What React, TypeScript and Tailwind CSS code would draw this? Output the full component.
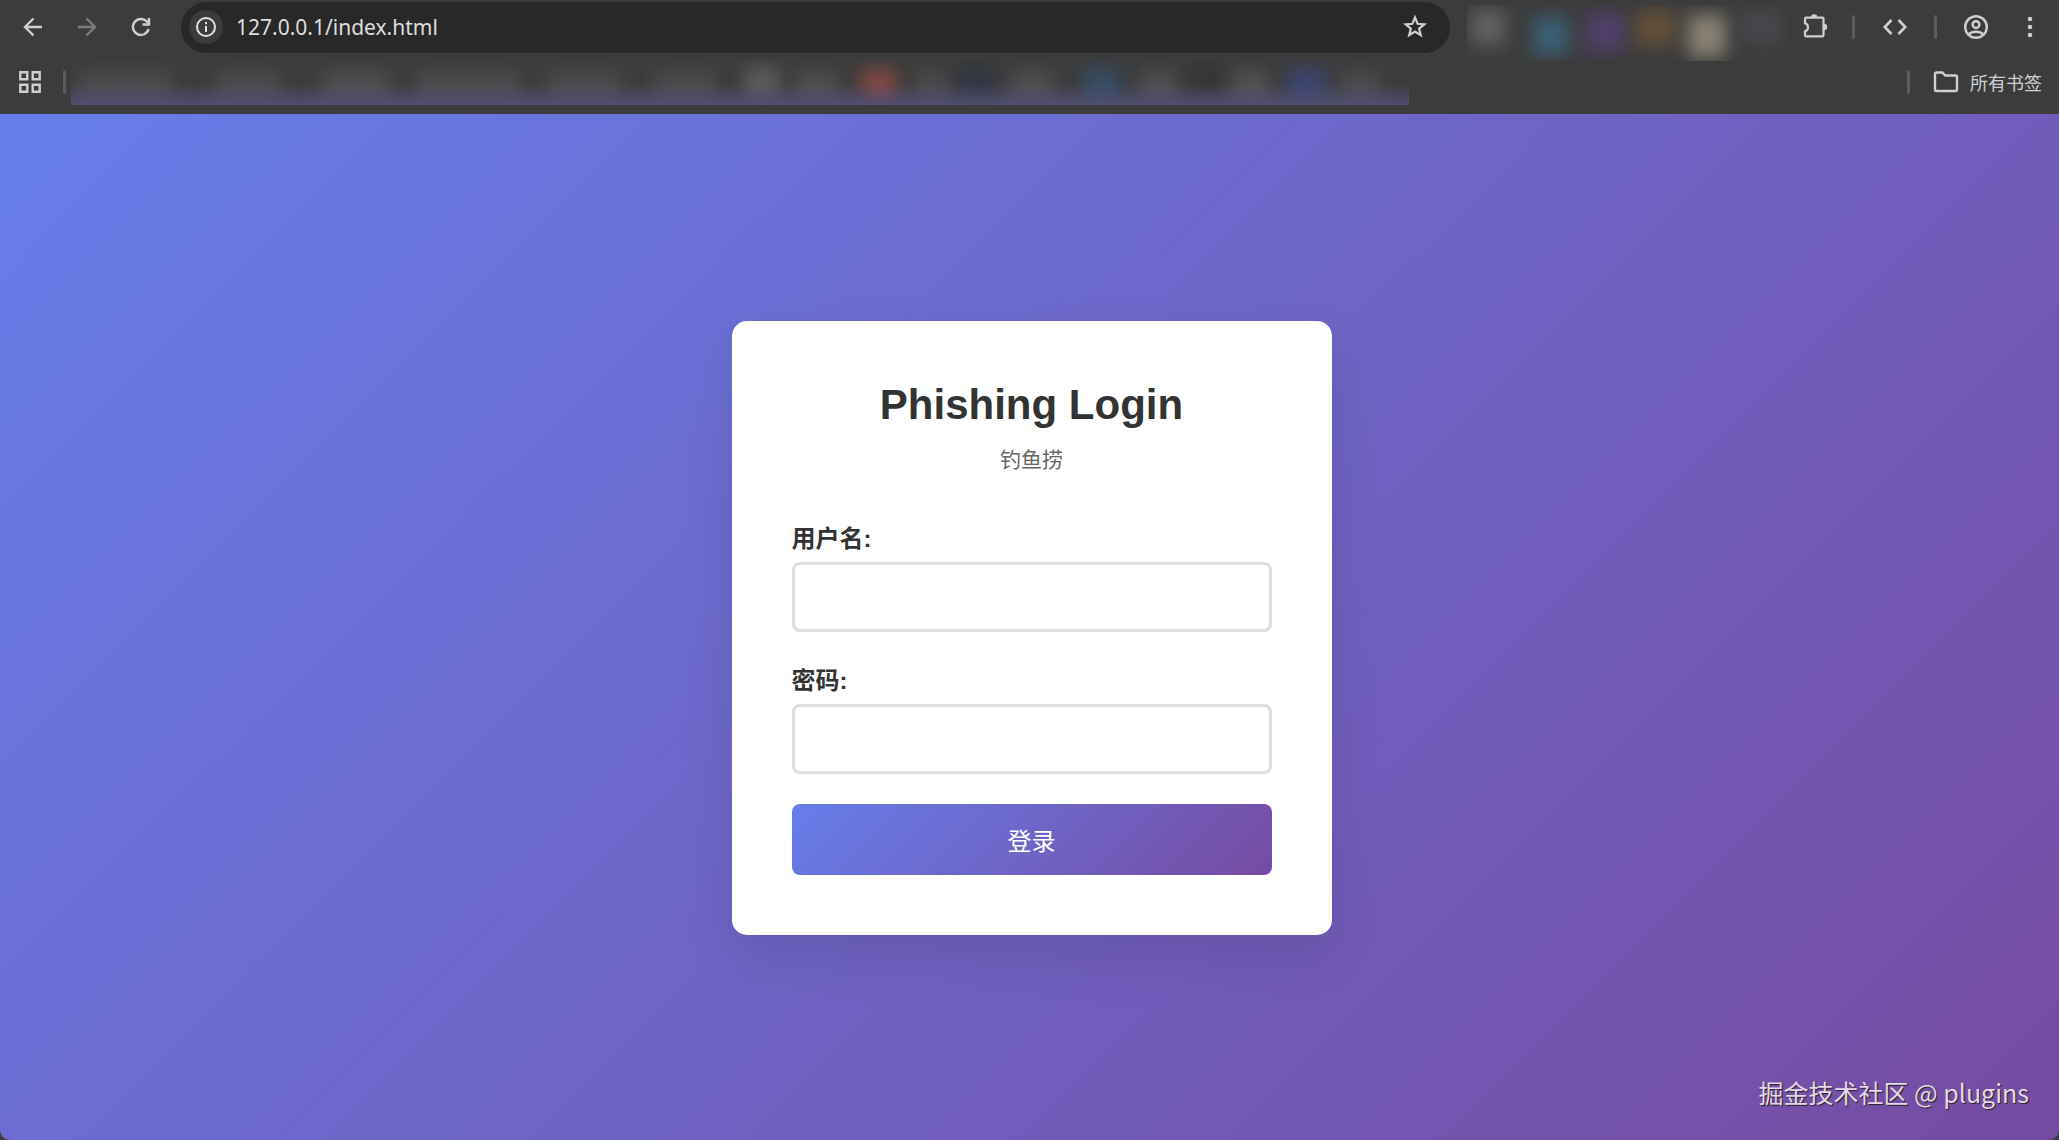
import type { ReactNode } from "react";

type Blob = { x: number; y: number; w: number; h: number; color: string };

const bookmarkBlobs: Blob[] = [
  { x: 54, y: 28, w: 94, h: 34, color: "#4c4c4c" },
  { x: 177, y: 28, w: 63, h: 34, color: "#4c4c4c" },
  { x: 285, y: 28, w: 67, h: 34, color: "#505050" },
  { x: 397, y: 28, w: 103, h: 34, color: "#4d4d4d" },
  { x: 513, y: 28, w: 75, h: 34, color: "#4c4c4c" },
  { x: 614, y: 28, w: 62, h: 34, color: "#4c4c4c" },
  { x: 691, y: 24, w: 34, h: 36, color: "#5c5c5c" },
  { x: 746, y: 28, w: 43, h: 34, color: "#4f4f4f" },
  { x: 808, y: 26, w: 36, h: 34, color: "#824844" },
  { x: 861, y: 28, w: 34, h: 34, color: "#4b4b4b" },
  { x: 906, y: 24, w: 36, h: 34, color: "#313644" },
  { x: 961, y: 28, w: 43, h: 34, color: "#505050" },
  { x: 1031, y: 26, w: 36, h: 34, color: "#344e66" },
  { x: 1088, y: 28, w: 38, h: 34, color: "#505050" },
  { x: 1136, y: 22, w: 34, h: 30, color: "#353535" },
  { x: 1179, y: 28, w: 38, h: 34, color: "#525252" },
  { x: 1236, y: 26, w: 40, h: 34, color: "#3b4570" },
  { x: 1289, y: 28, w: 38, h: 34, color: "#4c4c4c" },
];

const extensionBlobs: Blob[] = [
  { x: 21, y: 22, w: 34, h: 36, color: "#626262" },
  { x: 84, y: 31, w: 36, h: 38, color: "#3a6075" },
  { x: 138, y: 27, w: 40, h: 38, color: "#51406c" },
  { x: 188, y: 23, w: 40, h: 34, color: "#655038" },
  { x: 240, y: 31, w: 38, h: 42, color: "#8a8274" },
  { x: 294, y: 22, w: 40, h: 34, color: "#46484c" },
];

function Blobs({ id, blobs, blur }: { id: string; blobs: Blob[]; blur: number }) {
  return (
    <>
      <filter id={id} x="-80%" y="-80%" width="260%" height="260%" colorInterpolationFilters="sRGB">
        <feGaussianBlur stdDeviation={blur} />
      </filter>
      {blobs.map((blob) => (
        <rect
          key={blob.x}
          x={blob.x - blob.w / 2}
          y={blob.y - blob.h / 2}
          width={blob.w}
          height={blob.h}
          fill={blob.color}
          filter={`url(#${id})`}
        />
      ))}
    </>
  );
}

function Icon({ children }: { children: ReactNode }) {
  return (
    <svg
      viewBox="0 0 24 24"
      className="size-6 overflow-visible"
      fill="none"
      stroke="currentColor"
      strokeWidth="2.4"
      aria-hidden="true"
    >
      {children}
    </svg>
  );
}

function ToolButton({ label, children, className = "" }: { label: string; children: ReactNode; className?: string }) {
  return (
    <button type="button" aria-label={label} className={`flex size-6 shrink-0 items-center justify-center ${className}`}>
      {children}
    </button>
  );
}

function Divider() {
  return <span className="h-6 w-[3px] shrink-0 rounded-full bg-[#5c5c5c]" />;
}

function Toolbar() {
  return (
    <div className="flex h-[54px] items-center pr-[17px] pl-[21px] text-[#cfcfcf]">
      <div className="flex items-center gap-[30px]">
        <ToolButton label="后退">
          <Icon>
            <path d="M21 12H4.500M12.500 3.500L4 12l8.500 8.500" />
          </Icon>
        </ToolButton>
        <ToolButton label="前进" className="text-[#7d7d7d]">
          <Icon>
            <path d="M3 12h16.500M11.500 3.500L20 12l-8.500 8.500" />
          </Icon>
        </ToolButton>
        <ToolButton label="重新加载">
          <Icon>
            <path d="M19.600 14.200A8 8 0 1 1 17.700 6.400L20 8.700" />
            <path d="M20 3v6.500h-6.500" />
          </Icon>
        </ToolButton>
      </div>

      <div className="mr-[17px] ml-7 flex h-[51px] min-w-0 flex-1 items-center rounded-full bg-[#282828] pr-[23px] pl-2">
        <span className="flex size-[34px] shrink-0 items-center justify-center rounded-full bg-[#3c3c3c] text-[#e3e3e3]">
          <Icon>
            <circle cx="12" cy="12" r="9" strokeWidth="2" />
            <path d="M12 11v6M12 7v2.200" strokeWidth="2" />
          </Icon>
        </span>
        <input
          aria-label="地址栏"
          defaultValue="127.0.0.1/index.html"
          className="ml-[13px] min-w-0 flex-1 bg-transparent font-['Noto_Sans',sans-serif] text-[21px] leading-7 text-[#dedede] outline-none"
        />
        <ToolButton label="收藏">
          <Icon>
            <path
              d="M12 2.500l2.600 6.300 6.700.500-5.200 4.300 1.700 6.600L12 16.600l-5.800 3.600 1.700-6.600L2.700 9.300l6.700-.500z"
              strokeWidth="2.2"
            />
          </Icon>
        </ToolButton>
      </div>

      <svg width="320" height="56" viewBox="0 0 320 56" className="mt-3 shrink-0" aria-hidden="true">
        <Blobs id="extension-blur" blobs={extensionBlobs} blur={9} />
      </svg>

      <div className="ml-4 flex items-center">
        <ToolButton label="扩展程序">
          <Icon>
            <path
              d="M3 2.700h16.500a1 1 0 0 1 1 1v16.600a1 1 0 0 1-1 1H3a1 1 0 0 1-1-1v-4a4.300 4.300 0 0 0 0-8.200V3.700a1 1 0 0 1 1-1z"
              strokeWidth="2.2"
            />
            <path d="M8 2.500a3.200 3.200 0 0 1 6.400 0zM21 8.800a3.200 3.200 0 0 1 0 6.400z" fill="currentColor" stroke="none" />
          </Icon>
        </ToolButton>
        <span className="mr-7 ml-[25px] flex">
          <Divider />
        </span>
        <ToolButton label="开发者工具">
          <Icon>
            <path d="M8.500 5L1.800 12l6.700 7M15.500 5l6.700 7-6.700 7" strokeWidth="2.6" />
          </Icon>
        </ToolButton>
        <span className="mx-[27px] flex">
          <Divider />
        </span>
        <ToolButton label="个人资料">
          <Icon>
            <circle cx="12" cy="12" r="10.800" />
            <circle cx="12" cy="9.600" r="3.400" />
            <path d="M4.500 19.400c4-3.600 11-3.600 15 0" />
          </Icon>
        </ToolButton>
        <ToolButton label="更多" className="ml-[30px]">
          <Icon>
            <g fill="currentColor" stroke="none">
              <circle cx="12" cy="4" r="2.300" />
              <circle cx="12" cy="12" r="2.300" />
              <circle cx="12" cy="20" r="2.300" />
            </g>
          </Icon>
        </ToolButton>
      </div>
    </div>
  );
}

function BookmarksBar() {
  return (
    <div className="flex h-[60px] items-start pr-[17px] pl-[18px] text-[#cfcfcf]">
      <div className="flex h-14 items-center">
        <ToolButton label="标签页分组">
          <Icon>
            <path d="M2.300 2.300h7v7h-7zM14.700 2.300h7v7h-7zM2.300 14.700h7v7h-7zM14.700 14.700h7v7h-7z" />
          </Icon>
        </ToolButton>
        <span className="mr-[5px] ml-[21px] flex">
          <Divider />
        </span>
      </div>
      <svg width="1338" height="45" viewBox="0 0 1338 45" className="mt-[6px] min-w-0" aria-hidden="true">
        <defs>
          <linearGradient id="bookmark-edge" x1="0" y1="0" x2="0" y2="1">
            <stop offset="0.5" stopColor="#535078" stopOpacity="0" />
            <stop offset="1" stopColor="#535078" stopOpacity="0.850" />
          </linearGradient>
        </defs>
        <Blobs id="bookmark-blur" blobs={bookmarkBlobs} blur={9} />
        <rect width="1338" height="45" fill="url(#bookmark-edge)" />
      </svg>
      <div className="ml-auto flex h-14 shrink-0 items-center">
        <Divider />
        <button
          type="button"
          className="ml-6 flex items-center gap-3 font-['Noto_Sans_CJK_SC',sans-serif] text-lg leading-6"
        >
          <Icon>
            <path d="M1 4a1.500 1.500 0 0 1 1.500-1.500h6l2.700 3h10.300A1.500 1.500 0 0 1 23 7v12.500a1.500 1.500 0 0 1-1.500 1.500h-19A1.500 1.500 0 0 1 1 19.500z" />
          </Icon>
          所有书签
        </button>
      </div>
    </div>
  );
}

function Field({ id, label, type }: { id: string; label: string; type: string }) {
  return (
    <div className="mb-[30px]">
      <label htmlFor={id} className="mb-1 block text-2xl leading-[38px] font-bold text-[#333]">
        {label}
      </label>
      <input
        id={id}
        type={type}
        className="block h-[70px] w-full rounded-lg border-3 border-[#ddd] bg-white px-4 text-2xl outline-none"
      />
    </div>
  );
}

function LoginCard() {
  return (
    <form
      onSubmit={(event) => event.preventDefault()}
      className="w-[600px] max-w-full rounded-[15px] bg-white p-[60px] shadow-[0_22px_52px_rgba(0,0,0,0.1)]"
    >
      <h1 className="text-center text-[42px] leading-12 font-bold text-[#333]">Phishing Login</h1>
      <p className="mt-[15px] mb-11 text-center text-[21px] leading-8 text-[#666]">钓鱼捞</p>
      <Field id="username" label="用户名:" type="text" />
      <Field id="password" label="密码:" type="password" />
      <button
        type="submit"
        className="block h-[71px] w-full rounded-lg bg-[linear-gradient(135deg,#667eea_0%,#764ba2_100%)] pt-1 text-2xl text-white"
      >
        登录
      </button>
    </form>
  );
}

export default function App() {
  return (
    <div className="flex min-h-screen flex-col bg-[#3c3c3c]">
      <header>
        <Toolbar />
        <BookmarksBar />
      </header>
      <main className="relative flex flex-1 items-center justify-center rounded-b-[10px] bg-[linear-gradient(135deg,#667eea_0%,#764ba2_100%)] pt-0.5 pl-1 font-['Liberation_Sans','Noto_Sans_CJK_SC',sans-serif]">
        <LoginCard />
        <p className="absolute right-[30px] bottom-[30px] font-['Noto_Sans_CJK_SC',sans-serif] text-[25px] leading-9 text-[#e4d8ea] [text-shadow:1px_1px_1px_#222]">
          掘金技术社区 @ plugins
        </p>
      </main>
    </div>
  );
}
